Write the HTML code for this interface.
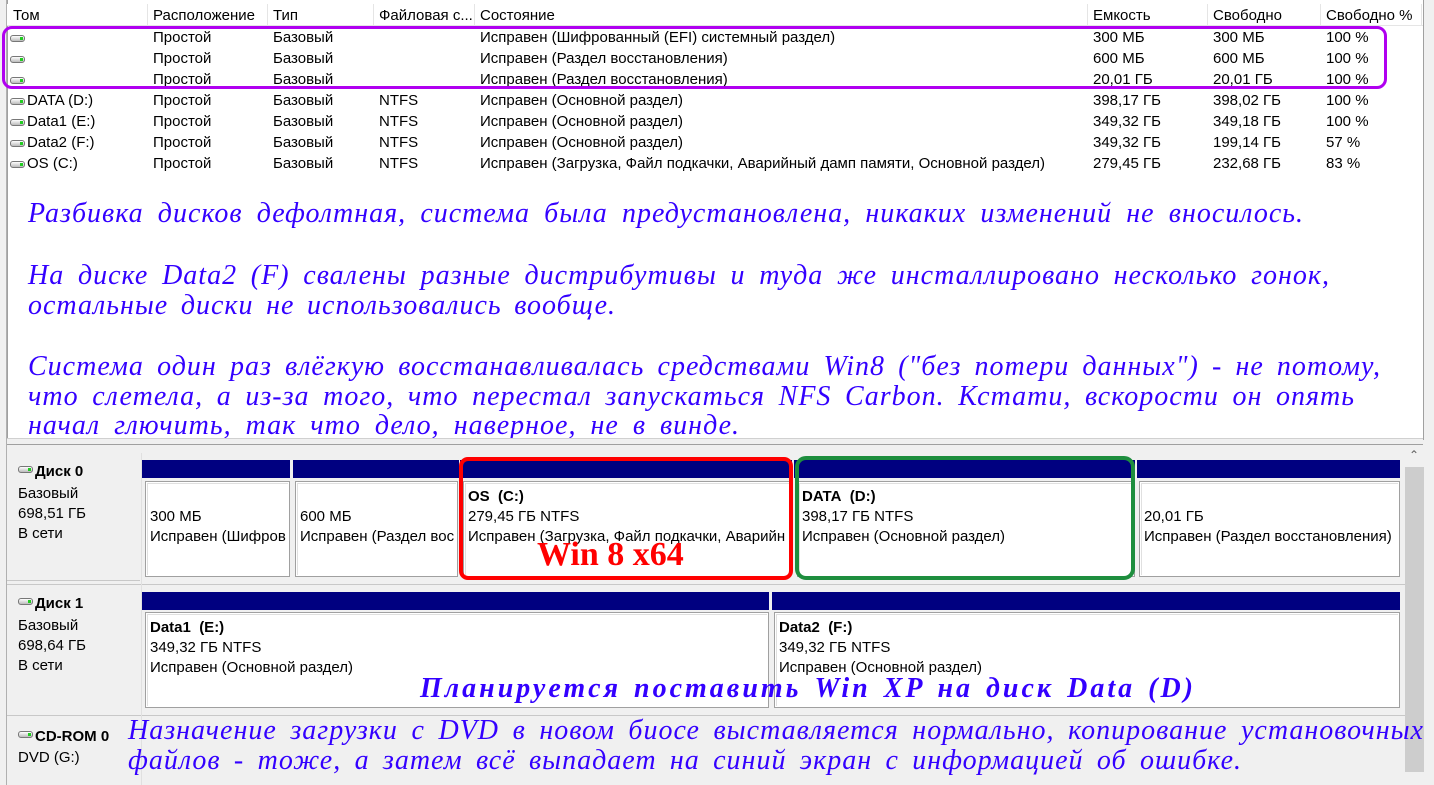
<!DOCTYPE html>
<html><head><meta charset="utf-8"><style>
*{margin:0;padding:0;box-sizing:border-box}
body{width:1434px;height:785px;overflow:hidden;background:#f0f0f0;font-family:"Liberation Sans",sans-serif;font-size:15px;color:#000;position:relative}
.a{position:absolute;white-space:nowrap}
.top{position:absolute;left:7px;top:0;width:1416px;height:438px;background:#fff;border-left:1px solid #a0a0a0}
.hdr{position:absolute;left:7px;top:4px;width:1416px;height:22px;background:#fff;border-bottom:1px solid #e5e5e5}
.sep{position:absolute;top:4px;width:1px;height:22px;background:#e5e5e5}
.it{position:absolute;font-family:"Liberation Serif",serif;font-style:italic;font-size:28px;letter-spacing:1px;color:#3300ff;white-space:nowrap;line-height:30px}
.j{text-align:justify;text-align-last:justify;white-space:normal}
.bar{position:absolute;height:18px;background:#000080}
.box{position:absolute;background:#fff;border:1px solid #a0a0a0;box-shadow:inset 0 0 0 1px #fff, inset 2px 2px 0 #e0e0e0}
.box div{position:absolute;left:4px;white-space:nowrap;font-size:15px}
.hd{display:inline-block;width:15px;height:7px;border:1px solid #777;border-radius:3px;background:linear-gradient(#fff,#bbb);position:relative;vertical-align:middle;margin-right:2px}
.hd:after{content:"";position:absolute;right:1px;top:1px;width:3px;height:3px;background:#2c2}
</style></head><body>
<div class="top"></div>
<div class="a" style="left:0;top:0;width:7px;height:785px;background:#f0f0f0;border-right:1px solid #b0b0b0"></div>
<div class="a" style="left:1423px;top:0;width:11px;height:440px;background:#f0f0f0;border-left:1px solid #a0a0a0"></div>
<div class="hdr"></div>
<div class="sep" style="left:147px"></div><div class="sep" style="left:267px"></div><div class="sep" style="left:373px"></div><div class="sep" style="left:474px"></div><div class="sep" style="left:1087px"></div><div class="sep" style="left:1207px"></div><div class="sep" style="left:1320px"></div><div class="sep" style="left:1421px"></div>
<div class="a" style="top:7px;left:13px">Том</div><div class="a" style="top:7px;left:153px">Расположение</div><div class="a" style="top:7px;left:273px">Тип</div><div class="a" style="top:7px;left:379px">Файловая с...</div><div class="a" style="top:7px;left:480px">Состояние</div><div class="a" style="top:7px;left:1093px">Емкость</div><div class="a" style="top:7px;left:1213px">Свободно</div><div class="a" style="top:7px;left:1326px">Свободно %</div>

<div class="a" style="top:29px;left:10px"><span class="hd"></span></div><div class="a" style="top:29px;left:153px">Простой</div><div class="a" style="top:29px;left:273px">Базовый</div><div class="a" style="top:29px;left:480px">Исправен (Шифрованный (EFI) системный раздел)</div><div class="a" style="top:29px;left:1093px">300 МБ</div><div class="a" style="top:29px;left:1213px">300 МБ</div><div class="a" style="top:29px;left:1326px">100 %</div>
<div class="a" style="top:50px;left:10px"><span class="hd"></span></div><div class="a" style="top:50px;left:153px">Простой</div><div class="a" style="top:50px;left:273px">Базовый</div><div class="a" style="top:50px;left:480px">Исправен (Раздел восстановления)</div><div class="a" style="top:50px;left:1093px">600 МБ</div><div class="a" style="top:50px;left:1213px">600 МБ</div><div class="a" style="top:50px;left:1326px">100 %</div>
<div class="a" style="top:71px;left:10px"><span class="hd"></span></div><div class="a" style="top:71px;left:153px">Простой</div><div class="a" style="top:71px;left:273px">Базовый</div><div class="a" style="top:71px;left:480px">Исправен (Раздел восстановления)</div><div class="a" style="top:71px;left:1093px">20,01 ГБ</div><div class="a" style="top:71px;left:1213px">20,01 ГБ</div><div class="a" style="top:71px;left:1326px">100 %</div>
<div class="a" style="top:92px;left:10px"><span class="hd"></span>DATA (D:)</div><div class="a" style="top:92px;left:153px">Простой</div><div class="a" style="top:92px;left:273px">Базовый</div><div class="a" style="top:92px;left:379px">NTFS</div><div class="a" style="top:92px;left:480px">Исправен (Основной раздел)</div><div class="a" style="top:92px;left:1093px">398,17 ГБ</div><div class="a" style="top:92px;left:1213px">398,02 ГБ</div><div class="a" style="top:92px;left:1326px">100 %</div>
<div class="a" style="top:113px;left:10px"><span class="hd"></span>Data1 (E:)</div><div class="a" style="top:113px;left:153px">Простой</div><div class="a" style="top:113px;left:273px">Базовый</div><div class="a" style="top:113px;left:379px">NTFS</div><div class="a" style="top:113px;left:480px">Исправен (Основной раздел)</div><div class="a" style="top:113px;left:1093px">349,32 ГБ</div><div class="a" style="top:113px;left:1213px">349,18 ГБ</div><div class="a" style="top:113px;left:1326px">100 %</div>
<div class="a" style="top:134px;left:10px"><span class="hd"></span>Data2 (F:)</div><div class="a" style="top:134px;left:153px">Простой</div><div class="a" style="top:134px;left:273px">Базовый</div><div class="a" style="top:134px;left:379px">NTFS</div><div class="a" style="top:134px;left:480px">Исправен (Основной раздел)</div><div class="a" style="top:134px;left:1093px">349,32 ГБ</div><div class="a" style="top:134px;left:1213px">199,14 ГБ</div><div class="a" style="top:134px;left:1326px">57 %</div>
<div class="a" style="top:155px;left:10px"><span class="hd"></span>OS (C:)</div><div class="a" style="top:155px;left:153px">Простой</div><div class="a" style="top:155px;left:273px">Базовый</div><div class="a" style="top:155px;left:379px">NTFS</div><div class="a" style="top:155px;left:480px">Исправен (Загрузка, Файл подкачки, Аварийный дамп памяти, Основной раздел)</div><div class="a" style="top:155px;left:1093px">279,45 ГБ</div><div class="a" style="top:155px;left:1213px">232,68 ГБ</div><div class="a" style="top:155px;left:1326px">83 %</div>
<div class="a" style="left:2px;top:26px;width:1385px;height:63px;border:3px solid #b000f0;border-radius:10px"></div>

<div class="it j" style="left:28px;top:199px;width:1276px">Разбивка дисков дефолтная, система была предустановлена, никаких изменений не вносилось.</div>
<div class="it j" style="left:28px;top:261px;width:1302px">На диске Data2 (F) свалены разные дистрибутивы и туда же инсталлировано несколько гонок,</div>
<div class="it j" style="left:28px;top:291px;width:588px">остальные диски не использовались вообще.</div>
<div class="it j" style="left:28px;top:352px;width:1353px">Система один раз влёгкую восстанавливалась средствами Win8 ("без потери данных") - не потому,</div>
<div class="it j" style="left:28px;top:382px;width:1327px">что слетела, а из-за того, что перестал запускаться NFS Carbon. Кстати, вскорости он опять</div>
<div class="it j" style="left:28px;top:411px;width:712px">начал глючить, так что дело, наверное, не в винде.</div>
<div class="a" style="left:7px;top:438px;width:1416px;height:7px;background:#f0f0f0;border-top:1px solid #d0d0d0;border-bottom:1px solid #a0a0a0"></div>

<div class="a" style="left:1405px;top:447px;width:19px;height:338px;background:#f0f0f0"></div>
<div class="a" style="left:1405px;top:467px;width:19px;height:305px;background:#cdcdcd"></div>
<div class="a" style="left:1409px;top:448px;font-size:12px;color:#606060">&#8963;</div>

<div class="a" style="left:7px;top:453px;width:133px;height:128px;border-bottom:1px solid #c8c8c8"></div>
<div class="a" style="left:18px;top:463px;font-weight:bold"><span class="hd" style="vertical-align:top;margin-top:3px"></span>Диск 0</div>
<div class="a" style="left:18px;top:485px">Базовый</div><div class="a" style="left:18px;top:505px">698,51 ГБ</div><div class="a" style="left:18px;top:525px">В сети</div>
<div class="bar" style="left:142px;top:460px;width:148px"></div><div class="bar" style="left:293px;top:460px;width:166px"></div><div class="bar" style="left:460px;top:460px;width:332px"></div><div class="bar" style="left:794px;top:460px;width:341px"></div><div class="bar" style="left:1137px;top:460px;width:263px"></div>
<div class="box" style="left:145px;top:481px;width:145px;height:96px;overflow:hidden"><div style="top:26px">300 МБ</div><div style="top:46px">Исправен (Шифров</div></div>
<div class="box" style="left:295px;top:481px;width:163px;height:96px;overflow:hidden"><div style="top:26px">600 МБ</div><div style="top:46px">Исправен (Раздел вос</div></div>
<div class="box" style="left:463px;top:481px;width:328px;height:96px;overflow:hidden"><div style="top:6px;font-weight:bold">OS&nbsp; (C:)</div><div style="top:26px">279,45 ГБ NTFS</div><div style="top:46px">Исправен (Загрузка, Файл подкачки, Аварийн</div></div>
<div class="box" style="left:797px;top:481px;width:338px;height:96px"><div style="top:6px;font-weight:bold">DATA&nbsp; (D:)</div><div style="top:26px">398,17 ГБ NTFS</div><div style="top:46px">Исправен (Основной раздел)</div></div>
<div class="box" style="left:1139px;top:481px;width:261px;height:96px"><div style="top:26px">20,01 ГБ</div><div style="top:46px">Исправен (Раздел восстановления)</div></div>
<div class="a" style="left:459px;top:457px;width:334px;height:123px;border:4px solid #ff0000;border-radius:9px"></div>
<div class="a" style="left:795px;top:456px;width:340px;height:124px;border:4px solid #1e8e3e;border-radius:11px"></div>
<div class="a" style="left:537px;top:536px;font-family:'Liberation Serif',serif;font-weight:bold;font-size:34px;color:#f00">Win 8 x64</div>
<div class="a" style="left:7px;top:584px;width:1398px;height:1px;background:#c8c8c8"></div>

<div class="a" style="left:18px;top:595px;font-weight:bold"><span class="hd" style="vertical-align:top;margin-top:3px"></span>Диск 1</div>
<div class="a" style="left:18px;top:617px">Базовый</div><div class="a" style="left:18px;top:637px">698,64 ГБ</div><div class="a" style="left:18px;top:657px">В сети</div>
<div class="bar" style="left:142px;top:592px;width:627px"></div><div class="bar" style="left:772px;top:592px;width:628px"></div>
<div class="box" style="left:145px;top:612px;width:624px;height:96px"><div style="top:6px;font-weight:bold">Data1&nbsp; (E:)</div><div style="top:26px">349,32 ГБ NTFS</div><div style="top:46px">Исправен (Основной раздел)</div></div>
<div class="box" style="left:774px;top:612px;width:626px;height:96px"><div style="top:6px;font-weight:bold">Data2&nbsp; (F:)</div><div style="top:26px">349,32 ГБ NTFS</div><div style="top:46px">Исправен (Основной раздел)</div></div>
<div class="it j" style="left:420px;top:674px;width:776px;font-weight:bold;letter-spacing:3px">Планируется поставить Win XP на диск Data (D)</div>
<div class="a" style="left:7px;top:715px;width:1398px;height:1px;background:#c8c8c8"></div>
<div class="a" style="left:141px;top:453px;width:1px;height:332px;background:#e0e0e0"></div>

<div class="a" style="left:18px;top:728px;font-weight:bold"><span class="hd" style="vertical-align:top;margin-top:3px"></span>CD-ROM 0</div>
<div class="a" style="left:18px;top:749px">DVD (G:)</div>
<div class="it j" style="left:128px;top:716px;width:1296px">Назначение загрузки с DVD в новом биосе выставляется нормально, копирование установочных</div>
<div class="it j" style="left:128px;top:746px;width:1114px">файлов - тоже, а затем всё выпадает на синий экран с информацией об ошибке.</div>
</body></html>
